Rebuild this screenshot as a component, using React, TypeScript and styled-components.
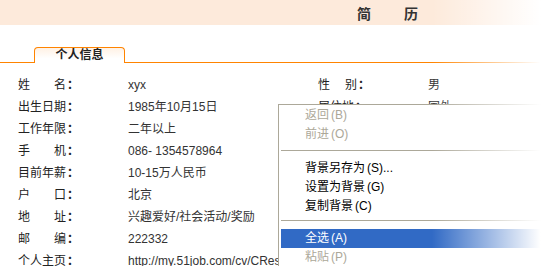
import React from "react";
import styled, { createGlobalStyle } from "styled-components";

const GlobalStyle = createGlobalStyle`
	html, body {
		margin: 0;
		padding: 0;
		background: #fff;
	}
	body {
		font-family: "Liberation Sans", "Noto Sans CJK SC", sans-serif;
	}
`;

const Page = styled.div`
	position: relative;
	width: 550px;
	height: 266px;
	overflow: hidden;
	background: #fff;
	color: #333;
	font-size: 12px;
`;

const Header = styled.div`
	height: 25px;
	background: #fdeadb;
	display: flex;
	align-items: center;
	padding-left: 357px;
	gap: 33px;
	font-size: 14px;
	font-weight: bold;
	color: #333;
`;

const TabBar = styled.div`
	margin-top: 22px;
	height: 15px;
	border-bottom: 1px solid #ff8400;
	display: flex;
	align-items: flex-end;
	padding-left: 34px;
`;

const Tab = styled.div`
	width: 89px;
	height: 15px;
	margin-bottom: -1px;
	border: 1px solid #ff8400;
	border-bottom: none;
	border-radius: 4px 4px 0 0;
	background: linear-gradient(#fff1e4, #fff 70%);
	display: flex;
	justify-content: center;
	align-items: flex-end;
	font-size: 12px;
	font-weight: bold;
	line-height: 15px;
	color: #222;
`;

const InfoList = styled.div`
	padding: 11px 0 0 18px;
`;

const Row = styled.div`
	display: grid;
	grid-template-columns: 110px 190px 110px 1fr;
	height: 22px;
	line-height: 22px;
	white-space: nowrap;
`;

const Label = styled.span`
	display: flex;
	color: #222;
`;

const LabelText = styled.span<{ $w: number }>`
	display: inline-flex;
	justify-content: space-between;
	width: ${(p) => p.$w}px;
`;

const Colon = styled.span`
	margin-left: 1px;
	font-weight: bold;
`;

const Value = styled.span`
	color: #333;
`;

const Menu = styled.div`
	position: absolute;
	left: 278px;
	top: 104px;
	right: -40px;
	bottom: -20px;
	background: #fff;
	border-top: 1px solid #aca899;
	border-left: 1px solid #aca899;
	padding: 1px 0 0 2px;
	font-size: 12px;
`;

const MenuItem = styled.div<{ $disabled?: boolean; $active?: boolean }>`
	height: 19px;
	line-height: 19px;
	padding-left: 24px;
	color: ${(p) => (p.$active ? "#fff" : p.$disabled ? "#aca899" : "#000")};
	background: ${(p) => (p.$active ? "#316ac5" : "transparent")};
`;

const Key = styled.span`
	margin-left: 2px;
`;

const MenuSep = styled.div<{ $top: number }>`
	height: 9px;
	&::before {
		content: "";
		display: block;
		height: 1px;
		margin-top: ${(p) => p.$top}px;
		background: #aca899;
	}
`;

const Fade = styled.div`
	position: absolute;
	top: 0;
	right: 0;
	bottom: 0;
	width: 118px;
	background: linear-gradient(to right, rgba(255, 255, 255, 0), #fff 92%);
	pointer-events: none;
`;

type Info = { label: string; value: string };

const rows: [Info, Info | null][] = [
	[{ label: "姓名", value: "xyx" }, { label: "性别", value: "男" }],
	[{ label: "出生日期", value: "1985年10月15日" }, { label: "居住地", value: "国外" }],
	[{ label: "工作年限", value: "二年以上" }, null],
	[{ label: "手机", value: "086- 1354578964" }, null],
	[{ label: "目前年薪", value: "10-15万人民币" }, null],
	[{ label: "户口", value: "北京" }, null],
	[{ label: "地址", value: "兴趣爱好/社会活动/奖励" }, null],
	[{ label: "邮编", value: "222332" }, null],
	[{ label: "个人主页", value: "http://my.51job.com/cv/CResume/CV_CResume.php" }, null],
];

const menu = [
	{ text: "返回", key: "(B)", disabled: true },
	{ text: "前进", key: "(O)", disabled: true },
	{ sep: 6 },
	{ text: "背景另存为", key: "(S)..." },
	{ text: "设置为背景", key: "(G)" },
	{ text: "复制背景", key: "(C)" },
	{ sep: 4 },
	{ text: "全选", key: "(A)", active: true },
	{ text: "粘贴", key: "(P)", disabled: true },
	{ sep: 4 },
];

function LabelCell({ text, w }: { text: string; w: number }) {
	return (
		<Label>
			<LabelText $w={w}>
				{text.split("").map((c, i) => (
					<span key={i}>{c}</span>
				))}
			</LabelText>
			<Colon>：</Colon>
		</Label>
	);
}

export default function App() {
	return (
		<Page>
			<GlobalStyle />
			<Header>
				<span>简</span>
				<span>历</span>
			</Header>
			<TabBar>
				<Tab>个人信息</Tab>
			</TabBar>
			<InfoList>
				{rows.map(([l, r], i) => (
					<Row key={i}>
						<LabelCell text={l.label} w={48} />
						<Value>{l.value}</Value>
						{r ? <LabelCell text={r.label} w={r.label.length > 2 ? 36 : 39} /> : <span />}
						{r ? <Value>{r.value}</Value> : <span />}
					</Row>
				))}
			</InfoList>
			<Menu>
				{menu.map((m, i) =>
					m.sep !== undefined ? (
						<MenuSep key={i} $top={m.sep} />
					) : (
						<MenuItem key={i} $disabled={m.disabled} $active={m.active}>
							{m.text}
							<Key>{m.key}</Key>
						</MenuItem>
					)
				)}
			</Menu>
			<Fade />
		</Page>
	);
}
